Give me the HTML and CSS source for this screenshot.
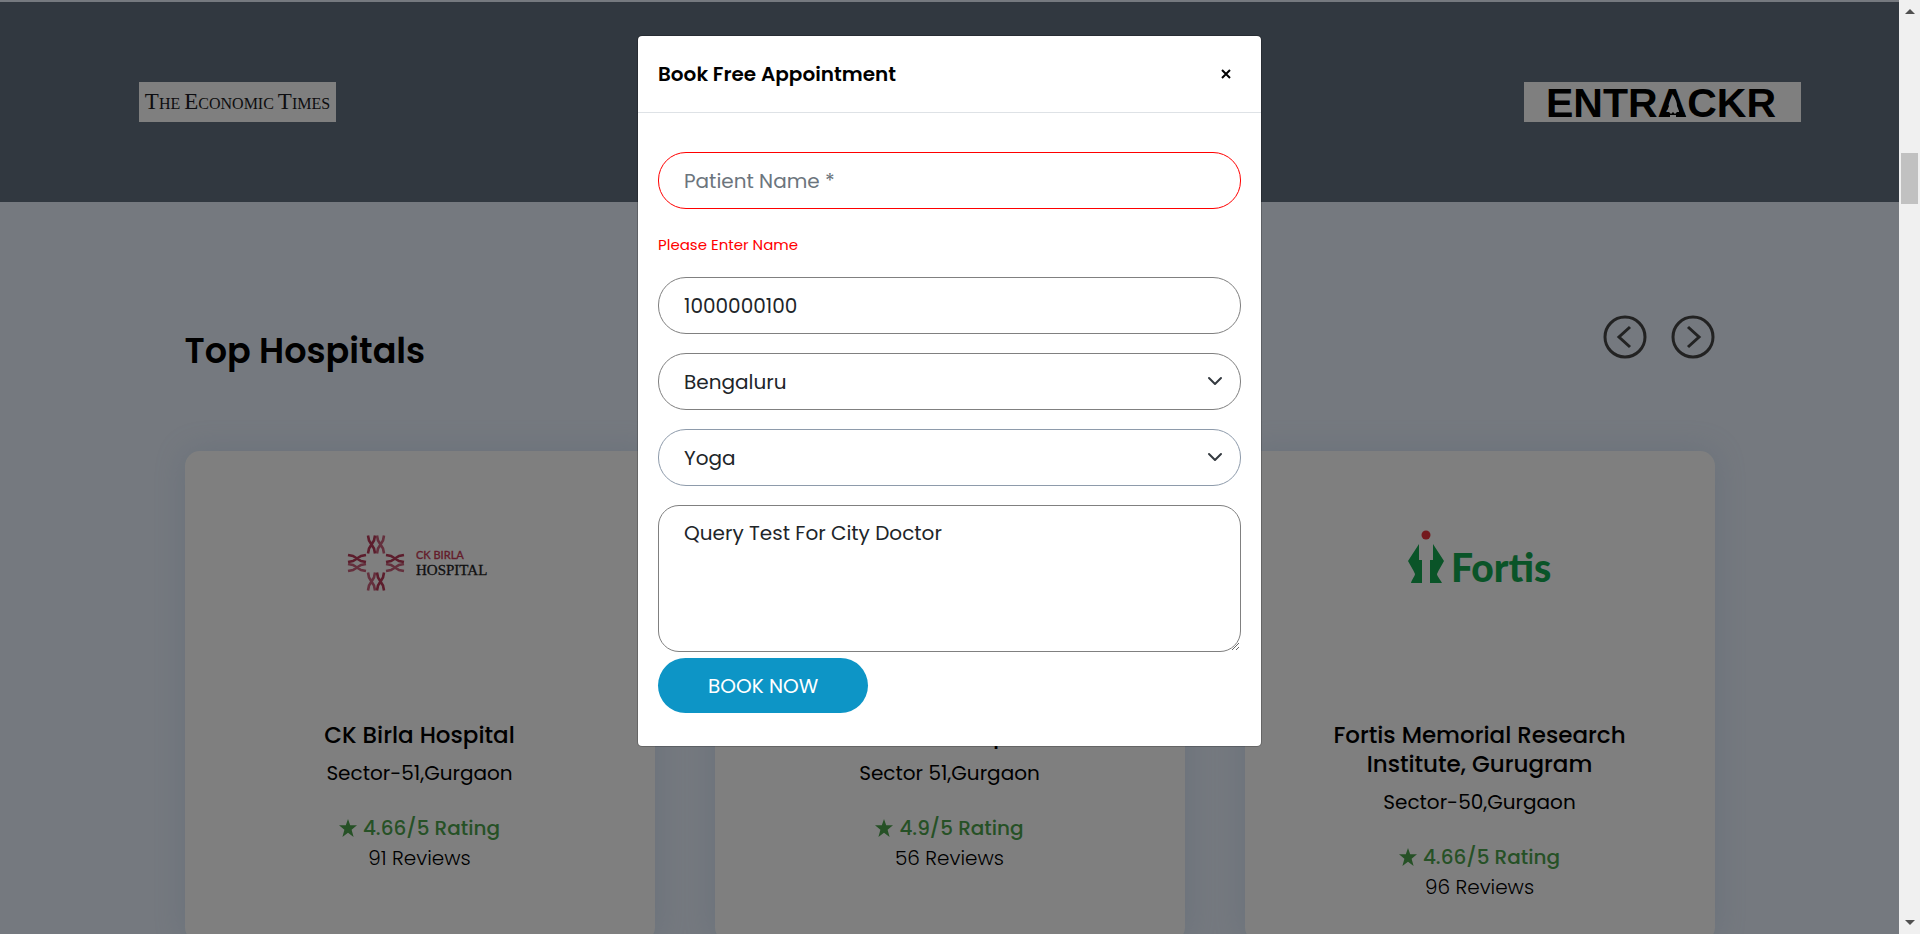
FILE: index.html
```html
<!DOCTYPE html>
<html lang="en">
<head>
<meta charset="utf-8">
<title>Top Hospitals</title>
<link rel="stylesheet" href="styles.css">
</head>
<body>
<div class="page">
  <section class="press">
    <div class="press-logo press-et"><span class="et-name"><b>T</b>HE <b>E</b>CONOMIC <b>T</b>IMES</span></div>
    <svg class="press-logo" width="277" height="40" viewBox="0 0 277 40" role="img" aria-label="Entrackr">
      <text x="22" y="35" class="entrackr-name">ENTRACKR</text>
      <path d="M149 13c3 4 4 8 4 11l2 5v2h-3l-1 2v2h-4v-2l-1-2h-3v-2l2-5c0-3 1-7 4-11z" fill="#fff"/>
      <path d="M138 30h7l2 2 2-2 2 2 2-2h7l2 5h-10v-2h-6v2h-10z" fill="#000"/>
    </svg>
  </section>

  <main class="hospitals">
    <div class="hospitals-head">
      <h1 class="hospitals-title">Top Hospitals</h1>
      <div class="arrows">
        <button class="arrow" type="button" aria-label="Previous">
          <svg width="44" height="44" viewBox="0 0 44 44"><circle cx="22" cy="22" r="20"/><path d="M27 12L16 22l11 10"/></svg>
        </button>
        <button class="arrow" type="button" aria-label="Next">
          <svg width="44" height="44" viewBox="0 0 44 44"><circle cx="22" cy="22" r="20"/><path d="M17 12l11 10-11 10"/></svg>
        </button>
      </div>
    </div>

    <div class="cards">
      <article class="card">
        <div class="card-logo">
          <svg width="146" height="66" viewBox="0 0 146 66" role="img" aria-label="CK Birla Hospital">
            <defs>
              <g id="strand" fill="none" stroke-width="2.600">
                <path d="M-3.500 -9L-2.500 -4L2.500 4L3.500 9M3.500 -9L2.500 -4L-2.500 4L-3.500 9"/>
              </g>
            </defs>
            <g stroke="#b83a58">
              <use href="#strand" x="24.500" y="15.500"/>
              <use href="#strand" x="33.500" y="52.500"/>
              <use href="#strand" transform="translate(10 29.500) rotate(90)"/>
              <use href="#strand" transform="translate(48 29.500) rotate(90)"/>
            </g>
            <g stroke="#c8607a">
              <use href="#strand" x="33.500" y="15.500"/>
              <use href="#strand" x="24.500" y="52.500"/>
              <use href="#strand" transform="translate(10 38.500) rotate(90)"/>
              <use href="#strand" transform="translate(48 38.500) rotate(90)"/>
            </g>
            <text x="69" y="30" class="birla-top">CK BIRLA</text>
            <text x="69" y="46" class="birla-bottom">HOSPITAL</text>
          </svg>
        </div>
        <h2 class="card-name">CK Birla Hospital</h2>
        <p class="card-place">Sector-51,Gurgaon</p>
        <p class="card-rating"><svg class="star" viewBox="0 0 18 18"><path d="M9 0l2.200 6.300H18l-5.400 4.400L14.600 18 9 13.800 3.400 18l2-7.300L0 6.300h6.800z"/></svg>4.66/5 Rating</p>
        <p class="card-reviews">91 Reviews</p>
      </article>
      <article class="card">
        <div class="card-logo"></div>
        <h2 class="card-name">Artemis Hospital</h2>
        <p class="card-place">Sector 51,Gurgaon</p>
        <p class="card-rating"><svg class="star" viewBox="0 0 18 18"><path d="M9 0l2.200 6.300H18l-5.400 4.400L14.600 18 9 13.800 3.400 18l2-7.300L0 6.300h6.800z"/></svg>4.9/5 Rating</p>
        <p class="card-reviews">56 Reviews</p>
      </article>
      <article class="card">
        <div class="card-logo">
          <svg width="146" height="66" viewBox="0 0 146 66" role="img" aria-label="Fortis">
            <circle cx="19" cy="6" r="4.500" fill="#e8323c"/>
            <g fill="#15a850">
              <path d="M12 15v16h3v23H4c1-4 4-7 4-9-2-5-5-9-7-13z"/>
              <path d="M26 15v16h-3v23h12c-2-4-5-7-5-9 2-5 5-9 7-13z"/>
            </g>
            <text x="44" y="53" class="fortis-name">Fortis</text>
          </svg>
        </div>
        <h2 class="card-name">Fortis Memorial Research Institute, Gurugram</h2>
        <p class="card-place">Sector-50,Gurgaon</p>
        <p class="card-rating"><svg class="star" viewBox="0 0 18 18"><path d="M9 0l2.200 6.300H18l-5.400 4.400L14.600 18 9 13.800 3.400 18l2-7.300L0 6.300h6.800z"/></svg>4.66/5 Rating</p>
        <p class="card-reviews">96 Reviews</p>
      </article>
    </div>
  </main>

  <div class="backdrop">
    <div class="modal" role="dialog" aria-labelledby="modal-title">
      <header class="modal-head">
        <h2 class="modal-title" id="modal-title">Book Free Appointment</h2>
        <button class="modal-close" type="button" aria-label="Close">
          <svg width="10" height="10" viewBox="0 0 10 10"><path d="M1 1l8 8M9 1L1 9"/></svg>
        </button>
      </header>
      <form class="modal-form">
        <input class="field field-invalid" type="text" placeholder="Patient Name *" aria-label="Patient Name" aria-describedby="name-error">
        <p class="field-error" id="name-error">Please Enter Name</p>
        <input class="field" type="tel" value="1000000100" aria-label="Phone number">
        <div class="select-wrap">
          <select class="field" aria-label="City"><option>Bengaluru</option></select>
          <svg class="chevron" viewBox="0 0 16 16"><path d="M2 5l6 6 6-6"/></svg>
        </div>
        <div class="select-wrap">
          <select class="field field-blue" aria-label="Treatment"><option>Yoga</option></select>
          <svg class="chevron" viewBox="0 0 16 16"><path d="M2 5l6 6 6-6"/></svg>
        </div>
        <textarea class="field field-area" aria-label="Query">Query Test For City Doctor</textarea>
        <button class="book" type="button">BOOK NOW</button>
      </form>
    </div>
  </div>
</div>

<div class="scrollbar" aria-hidden="true">
  <svg width="10" height="5" viewBox="0 0 10 5"><path d="M0 5l5-5 5 5z"/></svg>
  <div class="scroll-track"><div class="scroll-thumb"></div></div>
  <svg width="10" height="5" viewBox="0 0 10 5"><path d="M0 0l5 5 5-5z"/></svg>
</div>
</body>
</html>
```
FILE: styles.css
```css
* { box-sizing: border-box; }

body {
  margin: 0;
  height: 100vh;
  display: grid;
  grid-template-columns: 1fr 21px;
  overflow: hidden;
  font-family: Poppins, Inter, sans-serif;
  font-size: 20px;
  color: #212529;
}

h1, h2, p { margin: 0; }

.page {
  position: relative;
  overflow: hidden;
  padding-top: 2px;
  background: #eaf2fe;
}

/* Press logos */
.press {
  display: flex;
  justify-content: space-between;
  align-items: center;
  height: 200px;
  padding: 0 98px 0 139px;
  background: #627080;
}

.press-logo { background: #fff; overflow: visible; }

.press-et {
  display: flex;
  align-items: center;
  justify-content: center;
  width: 197px;
  height: 40px;
}

.et-name {
  font-family: "Liberation Serif", serif;
  font-size: 16px;
  color: #1a1a22;
  white-space: nowrap;
}

.et-name b { font-size: 23px; font-weight: 400; }

.entrackr-name { font: bold 41px "Liberation Sans", sans-serif; }

/* Hospital list */
.hospitals {
  width: 1530px;
  max-width: 100%;
  margin: 0 auto;
  padding-top: 113px;
}

.hospitals-head {
  display: flex;
  justify-content: space-between;
  height: 136px;
}

.hospitals-title {
  padding-top: 9px;
  font-size: 35px;
  font-weight: 600;
  line-height: 54px;
  color: #000;
}

.arrows { display: flex; gap: 24px; }

.arrow {
  width: 44px;
  height: 44px;
  padding: 0;
  border: 0;
  background: none;
}

.arrow svg {
  display: block;
  fill: none;
  stroke: #444;
  stroke-width: 3;
}

.cards {
  display: grid;
  grid-template-columns: repeat(3, 1fr);
  gap: 60px;
}

.card {
  min-height: 491px;
  padding: 78px 72px 24px;
  border-radius: 15px;
  background: #fff;
  box-shadow: 0 0 30px rgba(140, 180, 220, 0.25);
  text-align: center;
  color: #000;
}

.card-logo { height: 192px; }

.card-logo svg { overflow: visible; }

.card-name {
  font-size: 23px;
  font-weight: 500;
  line-height: 29px;
}

.card-place {
  margin-top: 8px;
  line-height: 30px;
}

.card-rating {
  display: flex;
  justify-content: center;
  align-items: center;
  gap: 6px;
  margin-top: 25px;
  font-weight: 500;
  line-height: 30px;
  color: #4ca24c;
}

.star { width: 18px; height: 18px; fill: currentColor; }

.card-reviews {
  font-weight: 300;
  line-height: 30px;
}

.birla-top { font: 500 11px Lato, sans-serif; fill: #c83c58; stroke: #c83c58; stroke-width: 0.3; }
.birla-bottom { font: 15px "Liberation Serif", serif; fill: #222; stroke: #222; stroke-width: 0.3; }
.fortis-name { font: 900 39px Lato, sans-serif; fill: #15a850; }

/* Appointment dialog */
.backdrop {
  position: absolute;
  inset: 0;
  display: flex;
  justify-content: center;
  align-items: flex-start;
  padding-top: 35px;
  background: rgba(0, 0, 0, 0.5);
}

.modal {
  width: 625px;
  max-width: 100%;
  border: 1px solid rgba(0, 0, 0, 0.2);
  border-radius: 5px;
  background: #fff;
  background-clip: padding-box;
}

.modal-head {
  display: flex;
  justify-content: space-between;
  align-items: center;
  height: 77px;
  padding: 0 30px 0 20px;
  border-bottom: 1px solid #dee2e6;
}

.modal-title {
  font-size: 20px;
  font-weight: 600;
  line-height: 30px;
  color: #000;
}

.modal-close {
  display: flex;
  padding: 0;
  border: 0;
  background: none;
}

.modal-close svg { fill: none; stroke: #000; stroke-width: 2; }

.modal-form { padding: 39px 20px 33px; }

.field {
  display: block;
  width: 100%;
  height: 57px;
  margin: 0 0 19px;
  padding: 0 25px;
  border: 1px solid #808080;
  border-radius: 28px;
  background: #fff;
  font: inherit;
  color: #212529;
  appearance: none;
}

.field::placeholder { color: #6c757d; opacity: 1; }
.field-invalid { border-color: #f00; }
.field-blue { border-color: #8e9bab; }

.field-error {
  margin-bottom: 15px;
  font-size: 15px;
  line-height: 34px;
  color: #f00;
}

.select-wrap { position: relative; }

.chevron {
  position: absolute;
  top: 20px;
  right: 18px;
  width: 16px;
  height: 16px;
  fill: none;
  stroke: #343a40;
  stroke-width: 2;
  stroke-linecap: round;
  stroke-linejoin: round;
  pointer-events: none;
}

.field-area {
  height: 147px;
  margin-bottom: 6px;
  padding-top: 12px;
  border-radius: 21px;
  line-height: 30px;
  resize: both;
}

.book {
  display: block;
  height: 55px;
  padding: 0 50px;
  border: 0;
  border-radius: 28px;
  background: #0d95c6;
  font: inherit;
  color: #fff;
}

/* Window scrollbar */
.scrollbar {
  display: flex;
  flex-direction: column;
  align-items: center;
  padding: 9px 0;
  background: #f0f0f0;
}

.scrollbar svg { fill: #505050; }

.scroll-track { flex: 1; padding-top: 139px; }

.scroll-thumb { width: 17px; height: 51px; background: #c1c1c1; }
```
